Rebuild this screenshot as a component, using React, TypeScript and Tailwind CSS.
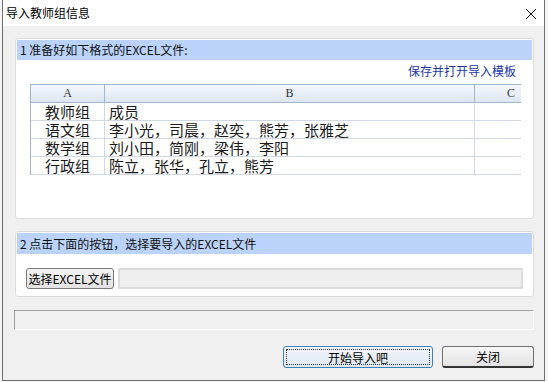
import React from 'react';

const font = { fontFamily: '"Noto Sans CJK SC", "Noto Sans", sans-serif' };

const rows = [
  ['教师组', '成员'],
  ['语文组', '李小光，司晨，赵奕，熊芳，张雅芝'],
  ['数学组', '刘小田，简刚，梁伟，李阳'],
  ['行政组', '陈立，张华，孔立，熊芳'],
];

function Sheet() {
  return (
    <div className="ml-[13px] mt-[5px] w-[491px] overflow-hidden border-l border-[#9eb6ce]">
      <div className="flex h-[19px] border-t border-b border-[#9eb6ce] bg-gradient-to-b from-[#f4f7fc] to-[#dde6f2] text-[12px] leading-[17px] text-[#333]" style={{ fontFamily: '"Liberation Serif", serif' }}>
        <div className="w-[74px] shrink-0 border-r border-[#9eb6ce] text-center">A</div>
        <div className="w-[370px] shrink-0 border-r border-[#9eb6ce] text-center">B</div>
        <div className="w-[72px] shrink-0 text-center">C</div>
      </div>
      {rows.map((r) => (
        <div key={r[0]} className="flex h-[18px] border-b border-[#d0d7e5] text-[15px] leading-[17px] text-[#1a1a1a]">
          <div className="w-[74px] shrink-0 border-r border-[#d0d7e5] text-center">{r[0]}</div>
          <div className="w-[370px] shrink-0 border-r border-[#d0d7e5] pl-[4px] whitespace-nowrap">{r[1]}</div>
          <div className="w-[72px] shrink-0"></div>
        </div>
      ))}
    </div>
  );
}

export default function App() {
  return (
    <div className="w-[548px] h-[382px] bg-[#f6f6f6] pl-[2px]" style={font}>
      <div className="w-[543px] h-[381px] flex flex-col border-x border-b border-[#6e6e6e] bg-[#f0f0f0]">
        {/* title bar */}
        <div className="h-[26px] shrink-0 bg-white flex items-center justify-between pl-[3px] pr-[7px]">
          <span className="text-[12px] text-black">导入教师组信息</span>
          <svg width="12" height="12" viewBox="0 0 12 12" className="mt-[1px]">
            <path d="M1 1 L11 11 M11 1 L1 11" stroke="#111" strokeWidth="1" />
          </svg>
        </div>

        <div className="flex flex-col pl-[12px] pt-[12px]">
          {/* step 1 */}
          <div className="w-[519px] h-[181px] rounded-[3px] border border-[#dcdcdc] bg-white p-[1px]">
            <div className="h-[20px] bg-[#bbd3fb] pl-[3px] text-[12px] leading-[20px] text-[#111]">1 准备好如下格式的EXCEL文件:</div>
            <div className="flex justify-end pr-[16px] pt-[3px] h-[19px] text-[12px] leading-[16px] text-[#2236a8]">保存并打开导入模板</div>
            <Sheet />
          </div>

          {/* step 2 */}
          <div className="mt-[12px] w-[519px] h-[66px] rounded-[3px] border border-[#dcdcdc] bg-white p-[1px]">
            <div className="h-[21px] bg-[#bbd3fb] pl-[3px] text-[12px] leading-[21px] text-[#111]">2 点击下面的按钮，选择要导入的EXCEL文件</div>
            <div className="flex items-center gap-[4px] pl-[9px] mt-[14px]">
              <button className="w-[88px] h-[21px] rounded-[3px] border border-[#7a7a7a] bg-gradient-to-b from-[#f4f4f4] to-[#e2e2e2] text-[12px] leading-[18px] text-black">选择EXCEL文件</button>
              <div className="w-[405px] h-[21px] border-2 border-[#dcdcdc] bg-[#efefef]"></div>
            </div>
          </div>
        </div>

        {/* progress */}
        <div className="ml-[11px] mt-[13px] w-[520px] h-[20px] border-t border-l border-r border-b border-t-[#a0a0a0] border-l-[#a0a0a0] border-r-white border-b-white bg-[#f0f0f0]"></div>

        {/* buttons */}
        <div className="flex justify-end gap-[9px] pr-[10px] mt-[16px]">
          <button className="w-[150px] h-[22px] rounded-[3px] border border-[#3c7fb1] bg-gradient-to-b from-[#f2f6fb] to-[#dde8f3] p-[2px]">
            <div className="w-full h-full border border-dotted border-[#333] text-[12px] leading-[15px] text-black">开始导入吧</div>
          </button>
          <button className="w-[92px] h-[22px] rounded-[3px] border border-[#707070] border-b-2 border-b-[#333] bg-gradient-to-b from-[#f6f6f6] to-[#e3e3e3] text-[12px] leading-[18px] text-black">关闭</button>
        </div>
      </div>
    </div>
  );
}
